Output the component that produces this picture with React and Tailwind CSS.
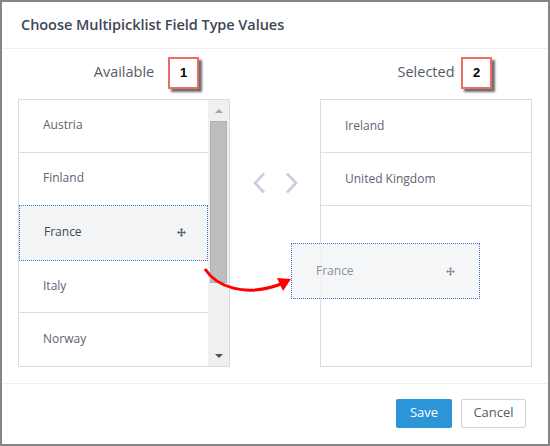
import React from "react";

const font = { fontFamily: '"Open Sans", "Liberation Sans", sans-serif' };

function MoveIcon({ className = "" }) {
  return (
    <svg width="9" height="9" viewBox="0 0 9 9" className={className}>
      <g fill="currentColor">
        <rect x="3.8" y="1.5" width="1.4" height="6" />
        <rect x="1.5" y="3.8" width="6" height="1.4" />
        <path d="M4.5 0 L6.3 2 L2.7 2 Z" />
        <path d="M4.5 9 L6.3 7 L2.7 7 Z" />
        <path d="M0 4.5 L2 2.7 L2 6.3 Z" />
        <path d="M9 4.5 L7 2.7 L7 6.3 Z" />
      </g>
    </svg>
  );
}

function Badge({ n, className }) {
  return (
    <div
      className={`absolute w-[31px] h-[32px] bg-white border-2 border-[#ec6d63] flex items-center justify-center text-[13px] font-bold text-black shadow-[3px_3px_2px_rgba(60,60,60,0.75)] ${className}`}
      style={{ fontFamily: '"Liberation Sans", Arial, sans-serif' }}
    >
      {n}
    </div>
  );
}

function Row({ label, last = false }) {
  return (
    <div
      className={`h-[53px] flex items-center pl-[24px] pb-px text-[12px] text-[#5d6470] ${
        last ? "" : "border-b border-[#dcdfe3]"
      }`}
    >
      {label}
    </div>
  );
}

export default function App() {
  return (
    <div
      className="w-[550px] h-[446px] bg-white border-2 border-[#858585] flex flex-col relative overflow-hidden"
      style={font}
    >
      {/* Header */}
      <div className="h-[47px] border-b border-[#eceef0] flex items-center pl-[19px] shrink-0">
        <h1 className="text-[14.5px] font-semibold text-[#3d4756] tracking-[-0.05px]">
          Choose Multipicklist Field Type Values
        </h1>
      </div>

      {/* Body */}
      <div className="flex-1 flex pl-[16px] pt-[12px]">
        {/* Available column */}
        <div className="w-[212px] flex flex-col">
          <div className="h-[22px] flex items-center justify-center text-[14.5px] text-[#555b66]">
            Available
          </div>
          <div className="mt-[16px] h-[268px] border border-[#d8dbdf] flex">
            <div className="flex-1 flex flex-col">
              <Row label="Austria" />
              <Row label="Finland" />
              <div className="h-[57px] -mt-px border border-dotted border-[#3d73dc] bg-[#f3f4f6] flex items-center justify-between pl-[24px] pr-[21px] pb-px text-[12px] text-[#3e4654]">
                <span>France</span>
                <MoveIcon className="text-[#5f6674]" />
              </div>
              <div className="h-[52px] flex items-center pl-[24px] pb-px text-[12px] text-[#5d6470] border-b border-[#dcdfe3]">
                Italy
              </div>
              <Row label="Norway" last />
            </div>
            {/* Scrollbar */}
            <div className="w-[21px] bg-[#f0f0f0] flex flex-col items-center">
              <div className="h-[21px] flex items-center justify-center">
                <div className="w-0 h-0 border-l-[4px] border-r-[4px] border-b-[4px] border-l-transparent border-r-transparent border-b-[#a3a3a3]" />
              </div>
              <div className="w-[17px] h-[162px] bg-[#bdbdbd] border border-[#b0b0b0]" />
              <div className="flex-1" />
              <div className="h-[21px] flex items-center justify-center">
                <div className="w-0 h-0 border-l-[4px] border-r-[4px] border-t-[4px] border-l-transparent border-r-transparent border-t-[#505050]" />
              </div>
            </div>
          </div>
        </div>

        {/* Move controls */}
        <div className="w-[90px] flex justify-center pt-[111px] gap-[19px]">
          <svg width="14" height="22" viewBox="0 0 14 22">
            <path d="M12 1.5 L3 11 L12 20.5" fill="none" stroke="#c7d0d8" strokeWidth="2.6" />
          </svg>
          <svg width="14" height="22" viewBox="0 0 14 22">
            <path d="M2 1.5 L11 11 L2 20.5" fill="none" stroke="#c7d0d8" strokeWidth="2.6" />
          </svg>
        </div>

        {/* Selected column */}
        <div className="w-[212px] flex flex-col">
          <div className="h-[22px] flex items-center justify-center text-[14.5px] text-[#555b66]">
            Selected
          </div>
          <div className="mt-[16px] h-[268px] border border-[#d8dbdf] flex flex-col">
            <Row label="Ireland" />
            <Row label="United Kingdom" />
          </div>
        </div>
      </div>

      {/* Footer */}
      <div className="h-[61px] border-t border-[#eceef0] flex items-center justify-end gap-[9px] pr-[22px] pb-[2px] shrink-0">
        <button className="w-[56px] h-[29px] rounded-[2px] bg-[#2b95d7] text-white text-[13px]">
          Save
        </button>
        <button className="w-[65px] h-[29px] rounded-[2px] bg-white border border-[#cfd2d6] text-[#555b66] text-[13px]">
          Cancel
        </button>
      </div>

      {/* Annotation badges */}
      <Badge n="1" className="left-[166px] top-[55px]" />
      <Badge n="2" className="left-[459px] top-[55px]" />

      {/* Drag ghost */}
      <div className="absolute left-[289px] top-[241px] w-[189px] h-[56px] border border-dotted border-[#3d73dc] bg-[#f3f4f6]/85 flex items-center justify-between pl-[24px] pr-[24px] text-[12px] text-[#8a909a]">
        <span>France</span>
        <MoveIcon className="text-[#8f949c]" />
      </div>

      {/* Drag arrow */}
      <svg className="absolute left-0 top-0" width="550" height="446" viewBox="0 0 550 446">
        <path
          d="M203 267 C 214 284, 242 296, 279 282"
          fill="none"
          stroke="#ff0000"
          strokeWidth="3"
        />
        <path d="M289 277 L275 276 L281 289 Z" fill="#ff0000" />
      </svg>
    </div>
  );
}
